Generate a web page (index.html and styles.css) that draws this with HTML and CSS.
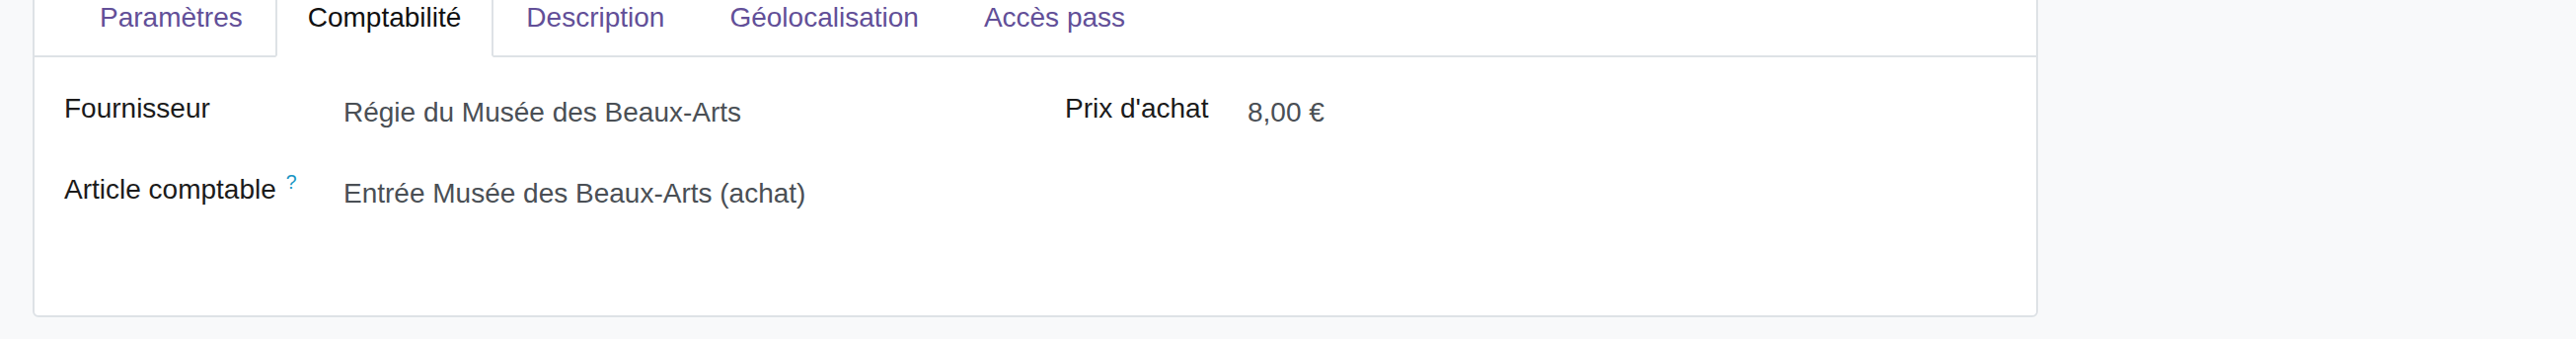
FILE: index.html
```html
<!doctype html>
<html lang="fr">
<head>
    <meta charset="utf-8" />
    <meta name="viewport" content="width=device-width, initial-scale=1.0">
    <title>Article - Comptabilité</title>
    <link rel="stylesheet" href="styles.css">
</head>
<body>

    <div class="page">
        <div class="notebook">
            <!-- onglets -->
            <ul class="nav-tabs">
                <li><a class="tab" href="#">Paramètres</a></li>
                <li><a class="tab active" href="#">Comptabilité</a></li>
                <li><a class="tab" href="#">Description</a></li>
                <li><a class="tab" href="#">Géolocalisation</a></li>
                <li><a class="tab" href="#">Accès pass</a></li>
            </ul>

            <div class="tab-pane">
                <div class="group">
                    <div class="label">Fournisseur</div>
                    <div class="value">Régie du Musée des Beaux-Arts</div>

                    <div class="label">Article comptable<sup class="help">?</sup></div>
                    <div class="value">Entrée Musée des Beaux-Arts (achat)</div>
                </div>

                <div class="group group-right">
                    <div class="label">Prix d'achat</div>
                    <div class="value">8,00 €</div>
                </div>
            </div>
        </div>
    </div>

</body>
</html>
```

FILE: styles.css
```css
body {
    margin: 0;
    background-color: #f8f9fa;
    font-family: "Liberation Sans", Arial, sans-serif;
    font-size: 28px;
    line-height: 42px;
    color: #212529;
}

.page {
    padding-left: 33px;
}

.notebook {
    width: 2032px;
    box-sizing: border-box;
    margin-top: -20px;
    background-color: #fff;
    border: 2px solid #dee2e6;
    border-radius: 6px;
}

.nav-tabs {
    display: flex;
    margin: 0;
    padding: 0 0 0 33px;
    list-style: none;
    border-bottom: 2px solid #dee2e6;
}

.tab {
    display: block;
    padding: 13px 31px 17px;
    margin-bottom: -2px;
    border: 2px solid transparent;
    border-radius: 6px 6px 0 0;
    color: #624f98;
    text-decoration: none;
}

.tab.active {
    color: #111;
    background-color: #fff;
    border-color: #dee2e6 #dee2e6 #fff;
}

.tab-pane {
    display: grid;
    grid-template-columns: 1014px 1fr;
    padding: 31px 0 66px 30px;
}

.group {
    display: grid;
    grid-template-columns: 283px 1fr;
    grid-auto-rows: 82px;
}

.group-right {
    grid-template-columns: 185px 1fr;
}

.label {
    color: #1b1b1b;
}

.value {
    padding-top: 4px;
    color: #4a4f55;
}

.help {
    margin-left: 10px;
    font-size: 19.5px;
    line-height: 1;
    vertical-align: 10px;
    color: #1a96c4;
}
```
